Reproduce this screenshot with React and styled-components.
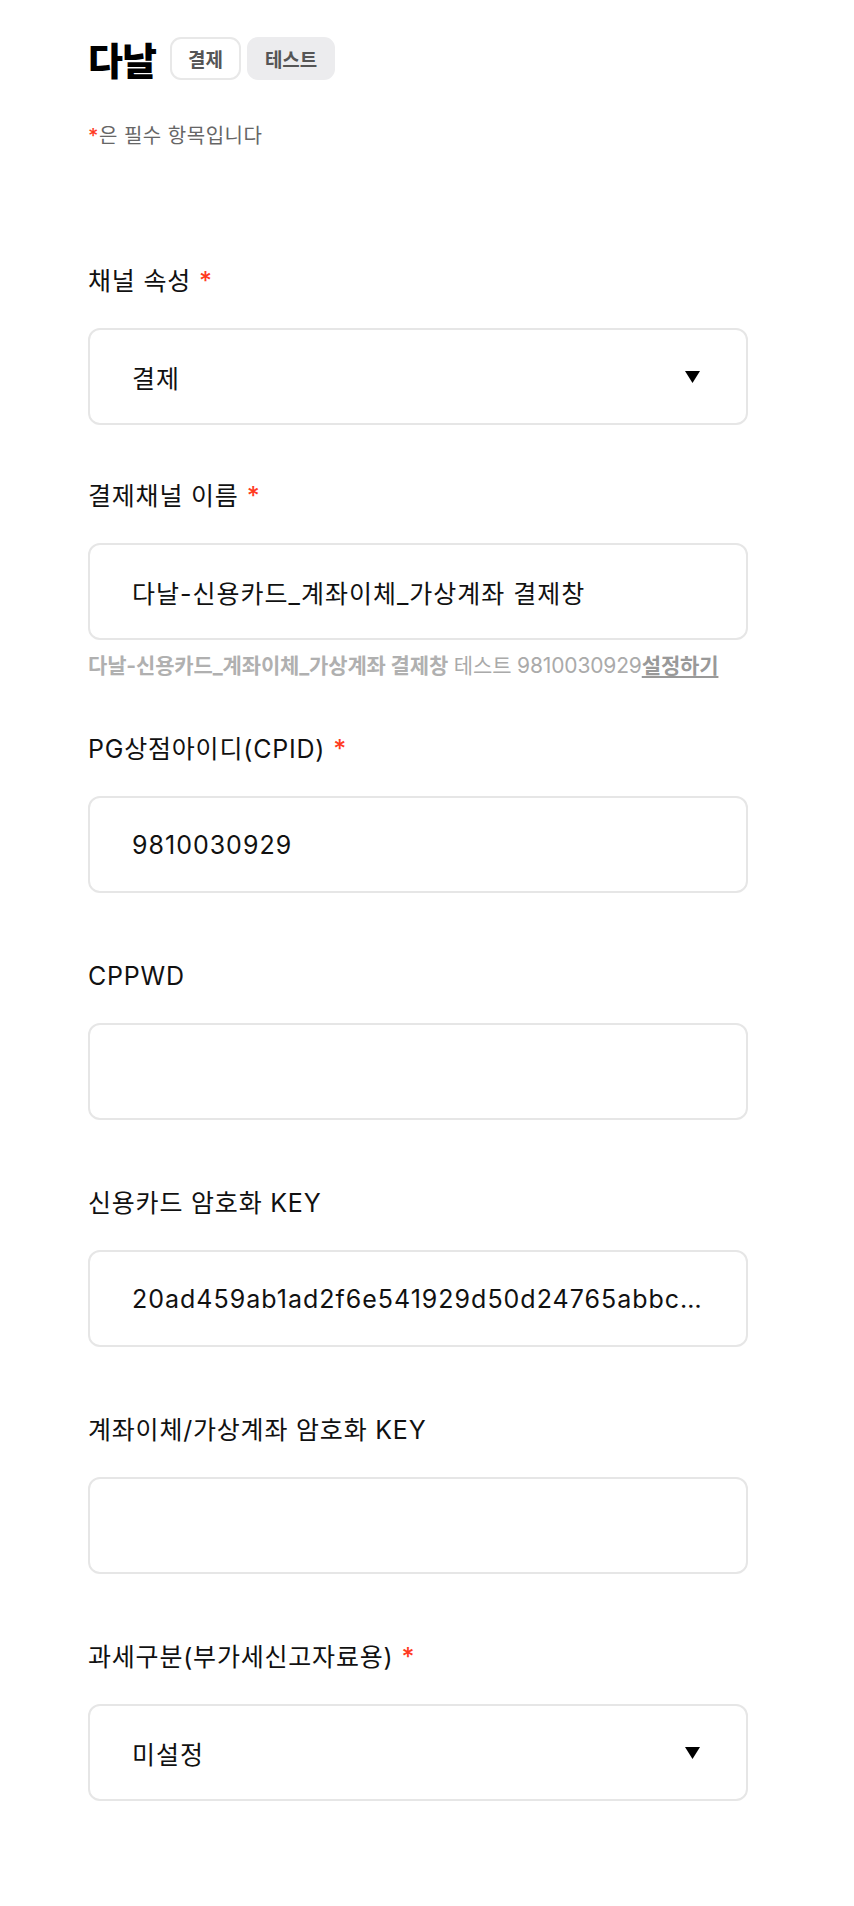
import styled, { createGlobalStyle } from "styled-components";

const GlobalStyle = createGlobalStyle`
  body {
    margin: 0;
    background: #ffffff;
    font-family: Inter, "Noto Sans CJK KR", sans-serif;
    color: #111;
  }
`;

const Page = styled.div`
  padding: 36px 0 107px 88px;
  width: 660px;
`;

const TitleRow = styled.div`
  display: flex;
  align-items: center;
  height: 44px;
`;

const Title = styled.h1`
  margin: 0 14px 0 0;
  font-size: 38px;
  font-weight: 900;
  letter-spacing: -1px;
  color: #000;
`;

const Badge = styled.span`
  display: inline-flex;
  align-items: center;
  justify-content: center;
  box-sizing: border-box;
  height: 43px;
  padding: 0 16px;
  margin-right: 6px;
  border-radius: 11px;
  font-size: 19px;
  font-weight: 700;
  color: #555;
  border: 2px solid ${(p) => (p.$filled ? "#ececee" : "#e8e8e8")};
  background: ${(p) => (p.$filled ? "#ececee" : "#fff")};
`;

const Note = styled.p`
  margin: 42px 0 115px;
  font-size: 20px;
  line-height: 28px;
  letter-spacing: 0.5px;
  color: #666;
`;

const Star = styled.span`
  color: #ff3b1f;
  font-weight: 500;
  margin-left: ${(p) => (p.$tight ? "0" : "8px")};
`;

const Field = styled.div`
  margin-bottom: 55px;
`;

const Label = styled.label`
  display: block;
  margin-bottom: 31px;
  font-size: 25px;
  line-height: 32px;
  letter-spacing: 0.8px;
  color: #111;
`;

const Box = styled.div`
  position: relative;
  box-sizing: border-box;
  height: 97px;
  border: 2px solid #e6e6e6;
  border-radius: 12px;
  display: flex;
  align-items: center;
  padding: 0 40px 0 42px;
  background: #fff;
`;

const TextInput = styled.input`
  width: 100%;
  border: none;
  outline: none;
  padding: 0;
  background: transparent;
  font-family: Inter, "Noto Sans CJK KR", sans-serif;
  font-size: 25px;
  letter-spacing: 1px;
  color: #111;
  text-overflow: ellipsis;
`;

const SelectValue = styled.span`
  flex: 1;
  font-size: 25px;
  letter-spacing: 1px;
  color: #111;
`;

const Arrow = styled.svg`
  width: 15px;
  height: 12px;
  margin-right: 6px;
`;

const Spacer = styled.div`
  height: ${(p) => p.$h}px;
`;

const Helper = styled.div`
  margin-top: 14px;
  font-size: 21px;
  line-height: 24px;
  letter-spacing: -0.15px;
  color: #aaa;
  white-space: nowrap;
`;

const HelperStrong = styled.b`
  font-weight: 700;
  color: ${(p) => (p.$dark ? "#999" : "#b0b0b0")};
  text-decoration: ${(p) => (p.$link ? "underline" : "none")};
  text-underline-offset: 3px;
`;

const SelectBox = ({ value }) => (
  <Box>
    <SelectValue>{value}</SelectValue>
    <Arrow viewBox="0 0 15 12">
      <path d="M0 0 H15 L7.5 12 Z" fill="#000" />
    </Arrow>
  </Box>
);

const InputBox = ({ value }) => (
  <Box>
    <TextInput readOnly value={value} />
  </Box>
);

const App = () => {
  return (
    <Page>
      <GlobalStyle />
      <TitleRow>
        <Title>다날</Title>
        <Badge>결제</Badge>
        <Badge $filled>테스트</Badge>
      </TitleRow>
      <Note>
        <Star $tight>*</Star>은 필수 항목입니다
      </Note>

      <Field>
        <Label>
          채널 속성<Star>*</Star>
        </Label>
        <SelectBox value="결제" />
      </Field>

      <Field>
        <Label>
          결제채널 이름<Star>*</Star>
        </Label>
        <InputBox value="다날-신용카드_계좌이체_가상계좌 결제창" />
        <Helper>
          <HelperStrong>다날-신용카드_계좌이체_가상계좌 결제창</HelperStrong> 테스트
          9810030929
          <HelperStrong $dark $link>
            설정하기
          </HelperStrong>
        </Helper>
      </Field>

      <Field>
        <Label>
          PG상점아이디(CPID)<Star>*</Star>
        </Label>
        <InputBox value="9810030929" />
        <Spacer $h={12} />
      </Field>

      <Field>
        <Label>CPPWD</Label>
        <InputBox value="" />
        <Spacer $h={12} />
      </Field>

      <Field>
        <Label>신용카드 암호화 KEY</Label>
        <InputBox value="20ad459ab1ad2f6e541929d50d24765abbc71f0e93a2d4c8" />
        <Spacer $h={12} />
      </Field>

      <Field>
        <Label>계좌이체/가상계좌 암호화 KEY</Label>
        <InputBox value="" />
        <Spacer $h={12} />
      </Field>

      <Field>
        <Label>
          과세구분(부가세신고자료용)<Star>*</Star>
        </Label>
        <SelectBox value="미설정" />
      </Field>
    </Page>
  );
};

export default App;
